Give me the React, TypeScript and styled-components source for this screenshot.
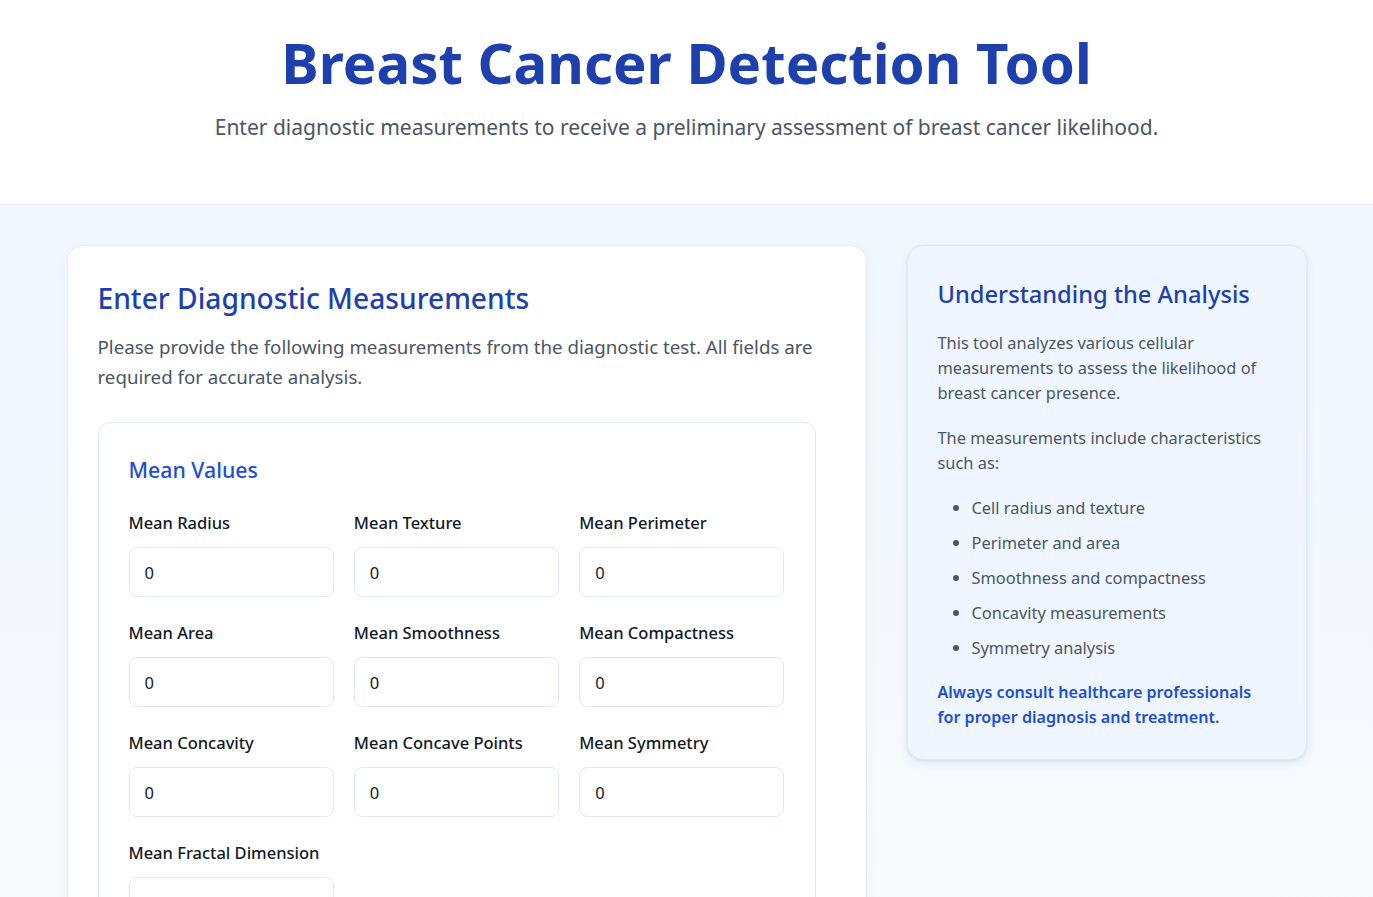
import React from "react";
import styled, { createGlobalStyle } from "styled-components";

const Global = createGlobalStyle`
  * { box-sizing: border-box; }
  html, body { margin: 0; padding: 0; }
  body {
    font-family: "Segoe UI", "Noto Sans", "Open Sans", sans-serif;
    background: linear-gradient(180deg, #eff6ff 0%, #f8fafc 100%);
    min-height: 100vh;
    color: #111827;
  }
`;

const Page = styled.div`
  min-height: 100vh;
`;

const Header = styled.header`
  background: #ffffff;
  border-bottom: 1px solid #e5eaf2;
  padding: 28px 20px 60px;
  text-align: center;
`;

const Title = styled.h1`
  margin: 0;
  font-size: 56.3px;
  line-height: 68px;
  font-weight: 700;
  color: #1e40af;
`;

const Subtitle = styled.p`
  margin: 15px 0 0;
  font-size: 21px;
  line-height: 33px;
  color: #4b5563;
`;

const Main = styled.main`
  max-width: 1240px;
  margin: 0 auto;
  padding: 40px 0 40px;
  display: grid;
  grid-template-columns: 2fr 1fr;
  gap: 40px;
  align-items: start;
`;

const Card = styled.section`
  background: #ffffff;
  border: 1px solid #e6ecf5;
  border-radius: 16px;
  padding: 30px 50px 30px 30px;
  box-shadow: 0 4px 12px rgba(15, 23, 42, 0.04);
`;

const CardTitle = styled.h2`
  margin: 0;
  font-size: 28.2px;
  line-height: 44px;
  font-weight: 500;
  color: #1e40af;
`;

const CardText = styled.p`
  margin: 12px 0 0;
  font-size: 18.7px;
  line-height: 30px;
  color: #4b5563;
`;

const Section = styled.div`
  margin-top: 30px;
  border: 1px solid #e2e8f0;
  border-radius: 12px;
  padding: 30px;
`;

const SectionTitle = styled.h3`
  margin: 0;
  font-size: 21.3px;
  line-height: 34px;
  font-weight: 500;
  color: #1d4ed8;
`;

const FieldGrid = styled.div`
  margin-top: 24px;
  display: grid;
  grid-template-columns: repeat(3, 1fr);
  column-gap: 20px;
  row-gap: 24px;
`;

const Field = styled.label`
  display: flex;
  flex-direction: column;
  gap: 12px;
`;

const FieldLabel = styled.span`
  font-size: 16.5px;
  line-height: 24px;
  font-weight: 500;
  color: #111827;
`;

const Input = styled.input`
  height: 50px;
  width: 100%;
  border: 1px solid #e2e8f0;
  border-radius: 8px;
  padding: 0 15px;
  font-family: inherit;
  font-size: 16.5px;
  color: #111827;
  background: #ffffff;
  outline: none;
`;

const InfoCard = styled.aside`
  background: #eff6ff;
  border: 1px solid #dbeafe;
  border-radius: 16px;
  padding: 30px 30px 29px;
  box-shadow: 0 4px 10px rgba(30, 64, 175, 0.08), 0 1px 3px rgba(15, 23, 42, 0.06);
`;

const InfoTitle = styled.h2`
  margin: 0;
  font-size: 23.7px;
  line-height: 36px;
  font-weight: 500;
  color: #1e40af;
`;

const InfoText = styled.p<{ $first?: boolean }>`
  margin: ${(p) => (p.$first ? "18px" : "20px")} 0 0;
  font-size: 16.4px;
  line-height: 25px;
  color: #4b5563;
`;

const List = styled.ul`
  margin: 20px 0 0;
  padding-left: 34px;
  color: #4b5563;
`;

const Item = styled.li`
  font-size: 16.4px;
  line-height: 25px;
  & + & {
    margin-top: 10px;
  }
`;

const Note = styled.p`
  margin: 20px 0 0;
  font-size: 16.1px;
  line-height: 25px;
  font-weight: 600;
  color: #1d4ed8;
`;

const fields = [
  "Mean Radius",
  "Mean Texture",
  "Mean Perimeter",
  "Mean Area",
  "Mean Smoothness",
  "Mean Compactness",
  "Mean Concavity",
  "Mean Concave Points",
  "Mean Symmetry",
  "Mean Fractal Dimension",
];

export default function App() {
  return (
    <Page>
      <Global />
      <Header>
        <Title>Breast Cancer Detection Tool</Title>
        <Subtitle>
          Enter diagnostic measurements to receive a preliminary assessment of breast cancer likelihood.
        </Subtitle>
      </Header>
      <Main>
        <Card>
          <CardTitle>Enter Diagnostic Measurements</CardTitle>
          <CardText>
            Please provide the following measurements from the diagnostic test. All fields are required for accurate analysis.
          </CardText>
          <Section>
            <SectionTitle>Mean Values</SectionTitle>
            <FieldGrid>
              {fields.map((f) => (
                <Field key={f}>
                  <FieldLabel>{f}</FieldLabel>
                  <Input type="number" defaultValue={0} />
                </Field>
              ))}
            </FieldGrid>
          </Section>
        </Card>
        <InfoCard>
          <InfoTitle>Understanding the Analysis</InfoTitle>
          <InfoText $first>
            This tool analyzes various cellular measurements to assess the likelihood of breast cancer presence.
          </InfoText>
          <InfoText>The measurements include characteristics such as:</InfoText>
          <List>
            <Item>Cell radius and texture</Item>
            <Item>Perimeter and area</Item>
            <Item>Smoothness and compactness</Item>
            <Item>Concavity measurements</Item>
            <Item>Symmetry analysis</Item>
          </List>
          <Note>Always consult healthcare professionals for proper diagnosis and treatment.</Note>
        </InfoCard>
      </Main>
    </Page>
  );
}
